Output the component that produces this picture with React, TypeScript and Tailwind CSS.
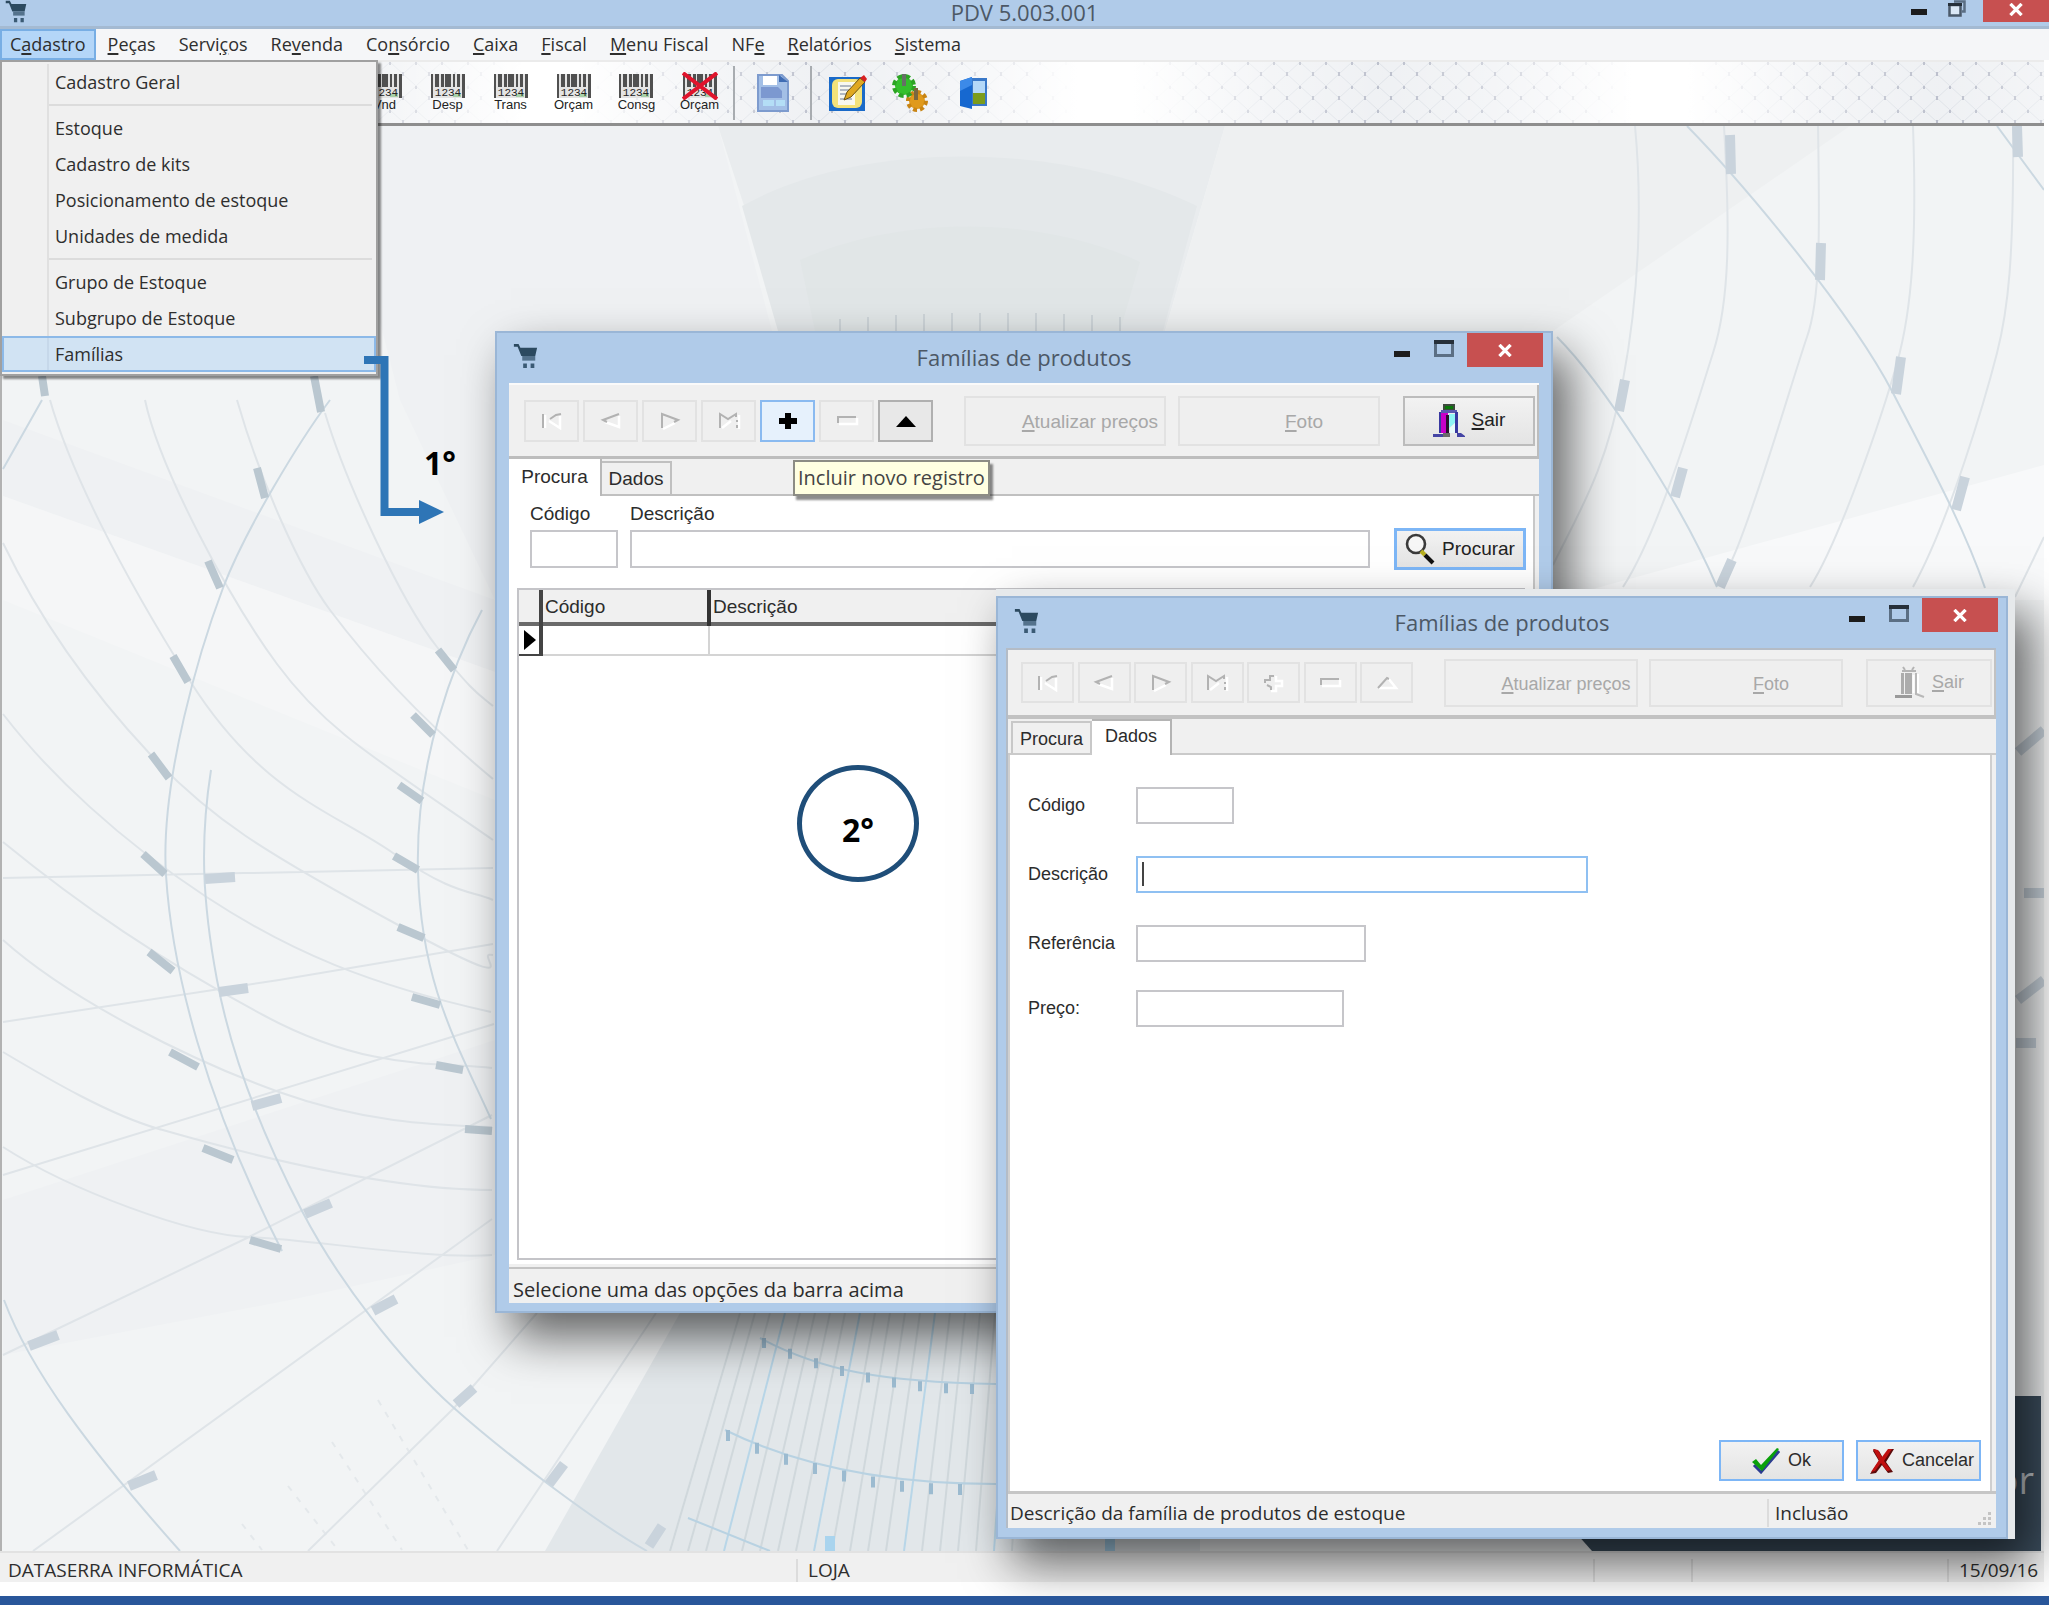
import React from "react";

type NavKind = "first" | "prev" | "next" | "last" | "add" | "remove" | "up";

interface MenuEntry {
  label: string;
  active?: boolean;
}

const MENUS = [
  "C&adastro",
  "&Peças",
  "Servi&ços",
  "Re&venda",
  "Co&nsórcio",
  "&Caixa",
  "&Fiscal",
  "&Menu Fiscal",
  "NF&e",
  "&Relatórios",
  "&Sistema",
];

const CADASTRO_GROUPS: MenuEntry[][] = [
  [{ label: "Cadastro Geral" }],
  [
    { label: "Estoque" },
    { label: "Cadastro de kits" },
    { label: "Posicionamento de estoque" },
    { label: "Unidades de medida" },
  ],
  [
    { label: "Grupo de Estoque" },
    { label: "Subgrupo de Estoque" },
    { label: "Famílias", active: true },
  ],
];

const NAV: { kind: NavKind; title: string }[] = [
  { kind: "first", title: "Primeiro registro" },
  { kind: "prev", title: "Registro anterior" },
  { kind: "next", title: "Próximo registro" },
  { kind: "last", title: "Último registro" },
  { kind: "add", title: "Incluir novo registro" },
  { kind: "remove", title: "Excluir registro" },
  { kind: "up", title: "Alterar registro" },
];

// "&" marks the accelerator letter
const Accel: React.FC<{ text: string }> = ({ text }) => {
  const at = text.indexOf("&");
  if (at < 0) return <span>{text}</span>;
  return (
    <span>
      {text.slice(0, at)}
      <span className="underline decoration-2 underline-offset-2">{text[at + 1]}</span>
      {text.slice(at + 2)}
    </span>
  );
};

const CartIcon: React.FC<{ className?: string }> = ({ className }) => (
  <svg viewBox="0 0 25 28" className={className} aria-hidden="true">
    <path d="M0 1h5l2 4h18l-2 9H8L4 4H0z" fill="#2c4a60" />
    <path d="M9 14h14v5H9z" fill="#54728c" />
    <path d="M10 22h4v5h-4zM18 22h4v5h-4z" fill="#3a5a74" />
  </svg>
);

const MinIcon = () => (
  <svg viewBox="0 0 16 6" className="h-[6px] w-[16px]" aria-hidden="true">
    <rect width="16" height="6" fill="#1c1c1c" />
  </svg>
);

const MaxIcon = () => (
  <svg viewBox="0 0 20 17" className="h-[17px] w-[20px]" aria-hidden="true">
    <rect x="1.5" y="2" width="17" height="13.5" fill="none" stroke="#5b6f84" strokeWidth="3" />
    <rect width="20" height="4" fill="#26303a" />
  </svg>
);

const RestoreIcon = () => (
  <svg viewBox="0 0 18 17" className="h-[17px] w-[18px]" aria-hidden="true">
    <path d="M6 1.5h10.5v10H14" fill="none" stroke="#5b6f84" strokeWidth="2.5" />
    <rect x="1.5" y="5" width="11" height="10.5" fill="#dbe8f6" stroke="#4b5a6a" strokeWidth="2.5" />
    <rect y="3" width="14" height="3" fill="#26303a" />
  </svg>
);

const CloseIcon = () => (
  <svg viewBox="0 0 16 14" className="h-[13px] w-[16px]" aria-hidden="true">
    <path d="M2 1l12 12M14 1L2 13" stroke="#fff" strokeWidth="3.6" />
  </svg>
);

const NAV_PATHS: Record<NavKind, { dark: string; light: string }> = {
  first: { dark: "M3 17V3M21 3l-5 1-6 4", light: "M5 17V4M9 10l11 7V5" },
  prev: { dark: "M20 3L4 9l4 2", light: "M6 11l14 5V5" },
  next: { dark: "M4 17V3l16 6-4 2", light: "M5 18l12-6" },
  last: { dark: "M3 17V3l8 5 8-5v3M20 9v2M20 14v3", light: "M5 17l9-7M22 4v14" },
  add: { dark: "M3 10V7h5V3h4M9 17v-3l-4-2", light: "M14 3v5h6v5h-6v5H9" },
  remove: { dark: "M3 12V6h18", light: "M4 13h18V7" },
  up: { dark: "M3 15L12 5l2 1", light: "M13 5l8 10H4" },
};

const NavGlyph: React.FC<{ kind: NavKind; enabled?: boolean }> = ({ kind, enabled }) => {
  if (enabled && kind === "add") {
    return (
      <svg viewBox="0 0 24 20" className="h-[20px] w-[24px]" aria-hidden="true">
        <path d="M9 2h6v5h6v6h-6v5H9v-5H3V7h6z" fill="#000" />
      </svg>
    );
  }
  if (enabled && kind === "up") {
    return (
      <svg viewBox="0 0 24 20" className="h-[20px] w-[24px]" aria-hidden="true">
        <path d="M12 5l10 11H2z" fill="#000" />
      </svg>
    );
  }
  return (
    <svg viewBox="0 0 24 20" className="h-[20px] w-[24px]" fill="none" aria-hidden="true">
      <path d={NAV_PATHS[kind].light} stroke="#fff" strokeWidth="2.5" />
      <path d={NAV_PATHS[kind].dark} stroke="#b2b2b2" strokeWidth="2" />
    </svg>
  );
};

const ExitIcon: React.FC<{ disabled?: boolean }> = ({ disabled }) =>
  disabled ? (
    <svg viewBox="0 0 32 34" className="h-[34px] w-[32px]" aria-hidden="true">
      <path d="M9 1l2 3M20 1l-2 3M8 5h14" stroke="#b4b4b4" strokeWidth="2" fill="none" />
      <path d="M7 7h3v21H7zM11 7h7v21h-7z" fill="#acacac" />
      <path d="M1 29h17v3H1z" fill="#9a9a9a" />
      <path d="M22 7v21l8 3" stroke="#b8b8b8" strokeWidth="2" fill="none" />
      <path d="M24 8v19M19.500 9v18" stroke="#fff" strokeWidth="2" />
    </svg>
  ) : (
    <svg viewBox="0 0 32 34" className="h-[34px] w-[32px]" aria-hidden="true">
      <path d="M10 0h12v6H10z" fill="#3d4a3d" />
      <path d="M12 2h8v3h-8z" fill="#0a7a0a" />
      <path d="M8 6h16v3H8z" fill="#5a5ab0" />
      <path d="M8 9h7v20H8z" fill="#c800c8" />
      <path d="M6 8h2v21H6zM22 8h3v21h-3z" fill="#3838a0" />
      <path d="M13 11h3v18h-3z" fill="#28102c" />
      <path d="M16 10h6v9l-6 5z" fill="#8ff4f4" />
      <path d="M17 24l5-5v10h-5z" fill="#e8fafa" />
      <path d="M0 30h12v3H0zM24 29h4l4 3v1h-8z" fill="#4444a4" />
      <path d="M10 29h7v4h-7z" fill="#6a6a6a" />
    </svg>
  );

const SearchIcon = () => (
  <svg viewBox="0 0 30 32" className="h-[32px] w-[30px]" aria-hidden="true">
    <circle cx="11" cy="11" r="9" fill="#f6f6f6" stroke="#3a3a3a" strokeWidth="2.6" />
    <path d="M16 18l4 4" stroke="#b8b020" strokeWidth="4" />
    <path d="M20 22l8 8" stroke="#111" strokeWidth="4" />
  </svg>
);

const CheckIcon = () => (
  <svg viewBox="0 0 28 26" className="h-[26px] w-[28px]" aria-hidden="true">
    <path d="M2 17l7 7L27 3" stroke="#2c3c90" strokeWidth="3" fill="none" />
    <path d="M0 14l4-3 5 6L25 0l2 1L10 23z" fill="#0aa00a" />
  </svg>
);

const CancelIcon = () => (
  <svg viewBox="0 0 24 26" className="h-[26px] w-[24px]" aria-hidden="true">
    <path d="M4 1l5 2 4 7 6-9h5l-8 13 7 10-5 1-6-8-6 8-6 1 9-13-6-10z" fill="#5c0a0a" />
    <path d="M3 1l5 1 4 7 6-8h4l-8 12 7 9-4 1-6-8-6 8-4 1 8-12z" fill="#c01010" />
  </svg>
);

interface AppWindowProps {
  title: string;
  className: string;
  children: React.ReactNode;
}

const AppWindow: React.FC<AppWindowProps> = ({ title, className, children }) => (
  <section
    className={`relative flex flex-col border-2 border-[#9ab6d6] bg-[#b0cbe9] font-['Liberation_Sans',sans-serif] ${className}`}
  >
    <header className="relative flex h-[50px] shrink-0 items-center justify-center pb-[2px] font-['Open_Sans',sans-serif] text-[22px] text-[#4c5866]">
      <CartIcon className="absolute left-[16px] top-[10px] h-[26px] w-[25px]" />
      <h2>{title}</h2>
      <div className="absolute right-[8px] top-0 flex h-[34px] items-center">
        <button className="flex h-full w-[42px] items-end justify-center pb-[10px]" aria-label="Minimizar">
          <MinIcon />
        </button>
        <button className="flex h-full w-[42px] items-center justify-center pb-1" aria-label="Maximizar">
          <MaxIcon />
        </button>
        <button
          className="ml-[2px] flex h-full w-[76px] items-center justify-center bg-[#c75050]"
          aria-label="Fechar"
        >
          <CloseIcon />
        </button>
      </div>
    </header>
    {children}
  </section>
);

const WideButton: React.FC<{ text: string; className: string }> = ({ text, className }) => (
  <button
    disabled
    className={`flex items-center justify-center border-2 border-[#e2e2e2] bg-[#efefef] pl-[50px] pt-1 text-[#a8a8a8] ${className}`}
  >
    <Accel text={text} />
  </button>
);

const SearchWindow = () => (
  <AppWindow title="Famílias de produtos" className="h-full text-[19px] text-[#2c2c2c]">
    <div className="mx-[12px] mb-[8px] flex min-h-0 flex-1 flex-col border-t-2 border-[#fafafa] bg-[#f0f0f0]">
      <div className="flex h-[74px] shrink-0 items-center border-b-[3px] border-r-2 border-[#bdbdbd] pl-[15px] pr-[2px]">
        <div className="flex gap-[4px]">
          {NAV.map(({ kind, title }) => {
            const enabled = kind === "add" || kind === "up";
            return (
              <button
                key={kind}
                aria-label={title}
                disabled={!enabled}
                className={`flex h-[42px] w-[55px] items-center justify-center border-2 ${
                  kind === "add"
                    ? "border-[#8abaf0] bg-[#e6f1fc]"
                    : kind === "up"
                      ? "border-[#b0b0b0] bg-[#e8e8e8]"
                      : "border-[#e2e2e2] bg-[#efefef]"
                }`}
              >
                <NavGlyph kind={kind} enabled={enabled} />
              </button>
            );
          })}
        </div>
        <WideButton text="&Atualizar preços" className="ml-auto h-[50px] w-[202px]" />
        <WideButton text="&Foto" className="ml-[12px] h-[50px] w-[202px]" />
        <button className="ml-[23px] flex h-[50px] w-[132px] items-center justify-center gap-[7px] border-2 border-[#bcbcbc] bg-gradient-to-b from-[#f2f2f2] to-[#e4e4e4] text-[#222]">
          <ExitIcon />
          <Accel text="&Sair" />
        </button>
      </div>

      <div role="tablist" className="flex h-[37px] shrink-0 items-end border-b-2 border-[#c0c0c0]">
        <button
          role="tab"
          aria-selected="true"
          className="-mb-[2px] h-[37px] w-[93px] border-r-2 border-[#b8b8b8] bg-white"
        >
          Procura
        </button>
        <button
          role="tab"
          aria-selected="false"
          className="h-[33px] w-[70px] border-r-2 border-t-2 border-[#c0c0c0] bg-[#f0f0f0] pt-[2px]"
        >
          Dados
        </button>
      </div>

      <div className="mr-[4px] flex min-h-0 flex-1 flex-col border-r-2 border-[#c8c8c8] bg-white">
        <div className="flex items-end pl-[21px] pr-[7px] pt-[6px]">
          <div className="flex w-[88px] flex-col">
            <label htmlFor="busca-codigo" className="h-[28px] leading-[24px]">
              Código
            </label>
            <input id="busca-codigo" className="h-[38px] border-2 border-[#c6c6ca] bg-white px-1" />
          </div>
          <div className="ml-[12px] flex flex-1 flex-col">
            <label htmlFor="busca-descricao" className="h-[28px] leading-[24px]">
              Descrição
            </label>
            <input id="busca-descricao" className="h-[38px] border-2 border-[#c6c6ca] bg-white px-1" />
          </div>
          <button className="-mb-[2px] ml-[24px] flex h-[42px] w-[132px] items-center justify-center gap-[7px] border-[3px] border-[#7db6f6] bg-gradient-to-b from-[#f2f2f2] to-[#e4e4e4] text-[#222]">
            <SearchIcon />
            Procurar
          </button>
        </div>

        <div className="mx-[8px] mt-[20px] min-h-0 flex-1 border-2 border-[#c4c4c8] bg-white">
          <table className="w-full table-fixed border-collapse text-left">
            <colgroup>
              <col className="w-[22px]" />
              <col className="w-[168px]" />
              <col />
            </colgroup>
            <thead>
              <tr className="h-[34px] border-b-4 border-[#6a6a6a] bg-[#f0f0f0]">
                <th className="border-r-4 border-r-[#444]" aria-label="Registro" />
                <th className="border-r-4 border-r-[#333] pl-[2px] pt-[3px] font-normal">Código</th>
                <th className="pl-[2px] pt-[3px] font-normal">Descrição</th>
              </tr>
            </thead>
            <tbody>
              <tr className="h-[31px] border-b-2 border-[#d4d4d4]">
                <td className="border-b-2 border-r-4 border-[#444] pl-[5px]">
                  <svg viewBox="0 0 12 20" className="h-[20px] w-[12px]" aria-hidden="true">
                    <path d="M0 0l12 10L0 20z" fill="#000" />
                  </svg>
                </td>
                <td className="border-r-2 border-[#d4d4d4]" />
                <td />
              </tr>
            </tbody>
          </table>
        </div>
        <div className="mt-[4px] h-[3px] shrink-0 bg-[#f0f0f0]" />
      </div>

      <footer className="flex h-[36px] shrink-0 items-center border-t-2 border-[#c4c4c4] pl-[4px] pt-[8px] font-['Open_Sans',sans-serif] text-[20px] leading-[26px]">
        Selecione uma das opções da barra acima
      </footer>
    </div>

    <div
      role="tooltip"
      className="absolute left-[296px] top-[127px] border-2 border-[#8c8c84] bg-[#ffffe1] px-[3px] font-['Open_Sans',sans-serif] text-[20px] leading-[32px] text-[#444] shadow-[3px_4px_2px_rgba(0,0,0,0.45)]"
    >
      Incluir novo registro
    </div>

    <div className="absolute left-[300px] top-[432px] flex h-[117px] w-[122px] items-center justify-center rounded-[50%] border-[5px] border-[#1f4e79] pt-3 font-['Open_Sans',sans-serif] text-[32px] font-bold text-black">
      2°
    </div>
  </AppWindow>
);

const FIELDS = [
  { id: "codigo", label: "Código", box: "w-[98px] border-[#c6c6ca]", gap: "mt-8" },
  { id: "descricao", label: "Descrição", box: "w-[452px] border-[#8fc0f2]", gap: "mt-8", caret: true },
  { id: "referencia", label: "Referência", box: "w-[230px] border-[#c6c6ca]", gap: "mt-8" },
  { id: "preco", label: "Preço:", box: "w-[208px] border-[#c6c6ca]", gap: "mt-7" },
];

const DataWindow = () => (
  <AppWindow title="Famílias de produtos" className="h-full text-[18px] text-[#2c2c2c]">
    <div className="ml-[8px] mr-[10px] mb-[9px] flex min-h-0 flex-1 flex-col border-l-2 border-t-2 border-[#b4bcc6] bg-[#f0f0f0]">
      <div className="flex h-[69px] shrink-0 items-center border-b-[4px] border-r-2 border-[#c2c2c2] pl-[13px] pr-[2px]">
        <div className="flex w-[392px] justify-between">
          {NAV.map(({ kind, title }) => (
            <button
              key={kind}
              aria-label={title}
              disabled
              className="flex h-[41px] w-[53px] items-center justify-center border-2 border-[#e2e2e2] bg-[#efefef]"
            >
              <NavGlyph kind={kind} />
            </button>
          ))}
        </div>
        <WideButton text="&Atualizar preços" className="ml-auto h-[48px] w-[194px]" />
        <WideButton text="&Foto" className="ml-[11px] h-[48px] w-[194px]" />
        <button
          disabled
          className="ml-[23px] flex h-[48px] w-[126px] items-center justify-center gap-[6px] border-2 border-[#e2e2e2] bg-[#efefef] text-[#a8a8a8]"
        >
          <ExitIcon disabled />
          <Accel text="&Sair" />
        </button>
      </div>

      <div role="tablist" className="flex h-[36px] shrink-0 items-end border-b-2 border-[#cacaca] pl-[3px]">
        <button
          role="tab"
          aria-selected="false"
          className="h-[32px] w-[81px] border-x-2 border-t-2 border-[#c8c8c8] bg-[#f0f0f0] pt-[2px]"
        >
          Procura
        </button>
        <button
          role="tab"
          aria-selected="true"
          className="-mb-[2px] h-[36px] w-[80px] border-r-2 border-t-2 border-[#b4b4b4] bg-white pb-1"
        >
          Dados
        </button>
      </div>

      <form className="mr-[4px] flex min-h-0 flex-1 flex-col border-l-2 border-r-2 border-[#cfcfcf] bg-white pl-[18px] pr-[9px]">
        {FIELDS.map((f) => (
          <div key={f.id} className={`relative flex h-[37px] items-center ${f.gap}`}>
            <label htmlFor={f.id} className="w-[108px]">
              {f.label}
            </label>
            <input id={f.id} className={`h-full border-2 bg-white px-1 ${f.box}`} />
            {f.caret && <span className="absolute left-[114px] top-[6px] h-[24px] w-[2px] bg-[#444]" />}
          </div>
        ))}
        <div className="mb-[10px] mt-auto flex justify-end gap-[12px]">
          <button
            type="button"
            className="flex h-[41px] w-[125px] items-center justify-center gap-[8px] border-2 border-[#7db6f6] bg-gradient-to-b from-[#f2f2f2] to-[#e4e4e4]"
          >
            <CheckIcon />
            Ok
          </button>
          <button
            type="button"
            className="flex h-[41px] w-[125px] items-center justify-end gap-[8px] border-2 border-[#7db6f6] bg-gradient-to-b from-[#f2f2f2] to-[#e4e4e4] pr-[5px]"
          >
            <CancelIcon />
            Cancelar
          </button>
        </div>
      </form>

      <footer className="flex h-[37px] shrink-0 items-center border-t-[3px] border-[#c6c6c6] pl-[2px] pt-[4px] font-['Open_Sans',sans-serif] text-[19px]">
        <span className="flex-1">Descrição da família de produtos de estoque</span>
        <span className="flex h-[28px] w-[229px] items-center border-l-2 border-[#dcdcdc] pl-[6px]">
          Inclusão
          <svg viewBox="0 0 14 14" className="ml-auto mr-[4px] mt-[12px] h-[14px] w-[14px]" aria-hidden="true">
            <path d="M10 0h3v3h-3zM10 5h3v3h-3zM10 10h3v3h-3zM5 5h3v3H5zM5 10h3v3H5zM0 10h3v3H0z" fill="#c4c4c4" />
          </svg>
        </span>
      </footer>
    </div>
  </AppWindow>
);

const BarcodeIcon: React.FC<{ caption: string; crossed?: boolean }> = ({ caption, crossed }) => (
  <span className="relative flex flex-col items-center">
    <svg viewBox="0 0 34 24" className="h-[24px] w-[34px]" aria-hidden="true">
      <rect width="34" height="24" fill="#e4e4e4" />
      <path d="M0 0h2v24H0zM4 0h4v13H4zM10 0h3v13h-3zM14 0h6v13h-6zM22 0h2v13h-2zM26 0h3v13h-3zM31 0h3v24h-3z" fill="#505050" />
      <path d="M22 20h8v3h-8z" fill="#a8d0a8" />
      <text x="17" y="22" fontSize="11" textAnchor="middle" fontFamily="Liberation Mono, monospace" fill="#222">
        1234
      </text>
    </svg>
    <span className="font-['Liberation_Sans',sans-serif] text-[13px] leading-[13px] text-[#222]">
      {caption}
    </span>
    {crossed && (
      <svg viewBox="0 0 36 28" className="absolute -top-[2px] h-[28px] w-[36px]" aria-hidden="true">
        <path d="M1 1l34 26M35 1L1 27" stroke="#e0142c" strokeWidth="4" />
      </svg>
    )}
  </span>
);

const DocIcon = () => (
  <svg viewBox="0 0 32 38" className="h-[38px] w-[32px]" aria-hidden="true">
    <path d="M1 1h24l6 6v30H1z" fill="#a3bfe6" stroke="#7d9bce" strokeWidth="2" />
    <path d="M6 2h14v9H6z" fill="#fff" />
    <path d="M22 1v7h9z" fill="#3f6cb4" />
    <path d="M4 13h17l4 4v7H4z" fill="#7c98d0" />
    <path d="M6 26h11v6H6zM19 26h9v6h-9z" fill="#b4def6" />
  </svg>
);

const NoteIcon = () => (
  <svg viewBox="0 0 38 36" className="h-[36px] w-[38px]" aria-hidden="true">
    <rect y="2" width="36" height="34" fill="#1a6ac8" />
    <rect x="3" y="4" width="30" height="29" rx="6" fill="#f4e27a" />
    <path d="M9 7h17v23H9z" fill="#f8f8f0" />
    <path d="M11 11h11M11 15h9M11 19h7M11 24h12" stroke="#9aa4b4" strokeWidth="1.5" />
    <path d="M15 25l3-8L31 3l5 4-14 15z" fill="#e0a820" stroke="#6a5010" />
    <path d="M31 3l4-3 3 4-2 3z" fill="#d82020" />
  </svg>
);

const GearsIcon = () => (
  <svg viewBox="0 0 38 38" className="h-[38px] w-[38px]" aria-hidden="true">
    <circle cx="25" cy="27" r="8" fill="#e09a1c" />
    <circle cx="25" cy="27" r="9" fill="none" stroke="#c88414" strokeWidth="4" strokeDasharray="4 3" />
    <circle cx="12" cy="12" r="9" fill="#34c02c" />
    <circle cx="12" cy="12" r="10" fill="none" stroke="#2ca424" strokeWidth="4" strokeDasharray="5 3" />
    <path d="M10 0h4v12h-4z" fill="#667066" />
    <path d="M22 14h4v12h-4z" fill="#7a6840" />
  </svg>
);

const DoorIcon = () => (
  <svg viewBox="0 0 30 32" className="h-[32px] w-[30px]" aria-hidden="true">
    <path d="M12 1h16v28H12z" fill="#3a78c8" />
    <path d="M14 4h12v12H14z" fill="#b4d8f8" />
    <path d="M14 16h12v11H14z" fill="#7c9c1c" />
    <path d="M1 4l12-4v32L1 29z" fill="#1668d0" />
    <path d="M1 4l12-4v8L1 14z" fill="#3c8ae8" />
  </svg>
);

const TOOL = "flex h-[44px] w-[63px] items-center justify-center";

const Toolbar = () => (
  <div
    role="toolbar"
    className="relative mr-[5px] flex h-[66px] shrink-0 items-center border-b-[3px] border-t-2 border-b-[#8e8e8e] border-t-[#ebebeb] bg-[#eef0f3] pl-[353px]"
  >
    <svg className="absolute inset-0 h-full w-full" aria-hidden="true">
      <defs>
        <pattern id="mesh" width="26" height="24" patternUnits="userSpaceOnUse">
          <path d="M0 0l13 12L26 0M0 24l13-12 13 12" stroke="#dde1e6" fill="none" />
          <path d="M12 10h2v4h-2zM0 0h1v3H0zM25 0h1v3h-1z" fill="#b9bdca" />
        </pattern>
        <linearGradient id="sheen" gradientUnits="userSpaceOnUse" x1="-5" y1="0" x2="550" y2="0" spreadMethod="repeat">
          <stop offset="0" stopColor="#fff" />
          <stop offset="0.05" stopColor="#fff" />
          <stop offset="0.3" stopColor="#fff" stopOpacity="0.35" />
          <stop offset="0.5" stopColor="#fff" stopOpacity="0.05" />
          <stop offset="0.7" stopColor="#fff" stopOpacity="0.35" />
          <stop offset="0.95" stopColor="#fff" />
          <stop offset="1" stopColor="#fff" />
        </linearGradient>
      </defs>
      <rect width="100%" height="100%" fill="url(#mesh)" />
      <rect width="100%" height="100%" fill="url(#sheen)" />
    </svg>
    <div className="relative flex items-center">
      {["Vnd", "Desp", "Trans", "Orçam", "Consg"].map((c) => (
        <button key={c} className={TOOL}>
          <BarcodeIcon caption={c} />
        </button>
      ))}
      <button className={TOOL}>
        <BarcodeIcon caption="Orçam" crossed />
      </button>
      <span className="ml-[2px] h-[54px] w-[2px] bg-[#a8acb0]" />
      <button className="mx-[6px] flex h-[44px] w-[63px] items-center justify-center" aria-label="Relatório">
        <DocIcon />
      </button>
      <span className="mr-[4px] h-[54px] w-[2px] bg-[#a8acb0]" />
      <button className={TOOL} aria-label="Anotações">
        <NoteIcon />
      </button>
      <button className={TOOL} aria-label="Configurações">
        <GearsIcon />
      </button>
      <button className={TOOL} aria-label="Sair">
        <DoorIcon />
      </button>
    </div>
  </div>
);

const ARCS = [
  "M330 400C300 440 245 530 223 588S160 780 166 875S205 1100 282 1251",
  "M482 610C455 660 415 760 418 871S455 1040 491 1119",
  "M211 770C200 840 202 900 217 980S265 1140 302 1211S400 1360 454 1408S600 1525 647 1551",
  "M4 1300C30 1370 90 1450 180 1551",
  "M42 400L3 469",
  "M1687 126C1740 180 1850 310 1893 393S1965 530 1985 588",
  "M1557 337C1600 380 1680 500 1717 587",
  "M1997 126L2044 190",
];

const FAINT = [
  "M50 400C70 470 120 570 190 681S330 810 393 853S470 890 493 900",
  "M145 400C160 470 230 600 277 664S370 755 493 840",
  "M237 400C260 480 300 570 330 610S410 710 493 779",
  "M325 413C345 480 400 600 437 647S480 695 493 706",
  "M3 543C40 620 90 690 150 754S260 850 400 926S470 950 493 955",
  "M3 714C50 775 120 840 205 896S370 985 491 1012",
  "M3 842C80 905 160 960 265 1016S440 1062 492 1068",
  "M3 940C70 1000 190 1060 279 1092S440 1125 492 1127",
  "M3 1052C50 1080 110 1115 159 1129S370 1190 492 1190",
  "M3 1147C70 1190 190 1235 249 1237S430 1260 492 1255",
  "M3 878L493 868",
  "M3 1022L279 980L493 944",
  "M3 1175L494 1024",
  "M3 1355L249 1237L492 1115",
  "M33 1551L492 1219",
  "M308 1551L454 1408L537 1313",
  "M497 1551L656 1313",
  "M1635 126C1642 200 1640 290 1623 380S1580 510 1553 565",
  "M1724 126C1730 230 1730 300 1713 353S1660 530 1623 587",
  "M1818 126C1820 240 1820 300 1807 337S1755 510 1732 560",
  "M1913 126C1917 240 1912 310 1897 363S1840 540 1810 587",
  "M2013 126C2014 260 2008 310 1997 353S1950 520 1913 587",
  "M2044 537L2015 597",
];

const MARKS = [
  "M42 376L45 396M314 376L321 412M257 468L265 498M208 561L220 588M173 656L188 682M151 754L169 778M143 854L165 874M149 952L173 971M170 1052L198 1067M203 1148L233 1160M250 1240L281 1249",
  "M438 650L454 670M413 715L433 735M399 785L422 801M394 856L418 870M398 927L424 938M412 997L440 1005M436 1065L463 1070M465 1129L492 1131",
];

const SOFT_MARKS =
  "M205 879L235 877M219 992L248 988M252 1106L281 1098M305 1214L331 1203M373 1311L396 1299M456 1404L474 1388M549 1484L564 1464M649 1546L662 1526M29 1346L58 1335M129 1486L156 1475M1730 135L1731 174M1821 243L1820 280M1901 357L1896 394M1965 477L1956 510M1625 380L1619 411M1683 468L1675 497M1732 560L1720 587M2017 126L2018 157M2018 752L2044 730M2024 893H2044M2018 1000L2044 980M2016 1043H2036";

// radial glass facade drawn behind the windows
const Wallpaper = () => (
  <svg
    viewBox="0 126 2044 1425"
    preserveAspectRatio="none"
    className="absolute inset-0 h-full w-full"
    fill="none"
    aria-hidden="true"
  >
    <rect y="126" width="2044" height="1425" fill="#f2f4f5" />
    <path d="M330 126H718L772 331H495V600L400 400z" fill="#eff1f3" />
    <path d="M718 126H1225L1165 331H785z" fill="#e9ecee" />
    <path d="M742 206C860 140 1060 140 1197 206L1163 331H778z" fill="#e4e8ea" />
    <path d="M800 260C900 215 1040 215 1140 262L1120 331H815z" fill="#e1e6e7" />
    <path d="M1225 126H1850L1553 331H1165z" fill="#eef0f1" />
    <path d="M3 420L495 600V672L3 496z" fill="#eff1f3" />
    <path d="M3 496L495 672V800L3 600z" fill="#f5f6f7" />
    <path d="M3 1200L495 1040V1255L290 1300L3 1355z" fill="#eff1f3" />
    <path d="M1553 600L2044 465V600z" fill="#f8f9fa" />
    <path d="M680 1313H1200V1551H545z" fill="#e2e7ea" />
    {Array.from({ length: 20 }, (_, i) => (
      <path
        key={i}
        d={`M${740 + i * 15} 1313L${670 + i * 18} 1551`}
        stroke={i % 5 === 3 ? "#b8d6e8" : "#d0d8dc"}
        strokeWidth="2"
      />
    ))}
    <path d="M760 1338C820 1370 880 1382 996 1384M725 1430C790 1462 880 1484 996 1484M688 1518L770 1551" stroke="#b8d2e2" strokeWidth="2" />
    {[0, 1, 2, 3, 4, 5, 6, 7, 8].map((i) => (
      <path
        key={i}
        d={`M${764 + i * 26} ${1338 + 46 * (1 - (1 - i / 8) ** 2)}v10M${728 + i * 29} ${1430 + 54 * (1 - (1 - i / 8) ** 2)}v11`}
        stroke="#9cbbd0"
        strokeWidth="4"
      />
    ))}
    <path d="M378 1400l90 150M332 1442l70 108M288 1486l50 64M242 1524l20 26" stroke="#e4e8eb" strokeWidth="2" strokeDasharray="6 8" />
    <path d="M825 1536h10v15h-10zM1105 1539h10v12h-10z" fill="#a9d4ee" />
    <path d={FAINT.join("")} stroke="#dfe4e8" strokeWidth="2" />
    <path d={ARCS.join("")} stroke="#cbd8e1" strokeWidth="2" />
    <path d={MARKS.join("")} stroke="#bac7d0" strokeWidth="8" />
    <path d={SOFT_MARKS} stroke="#c9d3dc" strokeWidth="10" />
    <path d="M840 331v-12M868 331v-14M896 331v-16M924 331v-17M952 331v-18M980 331v-18M1008 331v-18M1036 331v-18M1064 331v-17M1092 331v-16M1120 331v-14" stroke="#cdd4d8" strokeWidth="2" />
    <path d="M1560 1396H2041V1551H1592L1560 1515z" fill="#3c4e5e" />
    <path d="M1 126V1551" stroke="#b2b2b2" strokeWidth="2" />
  </svg>
);

const CadastroMenu = () => (
  <div
    role="menu"
    className="absolute left-0 top-full z-30 w-[378px] border-2 border-[#a0a0a0] bg-[#f0f0f0] py-[2px] shadow-[3px_3px_2px_rgba(0,0,0,0.45)]"
  >
    {CADASTRO_GROUPS.map((group, g) => (
      <React.Fragment key={g}>
        {g > 0 && (
          <div className="ml-[45px] mr-[4px] flex h-[10px] items-center border-l-2 border-[#e0e0e0]">
            <span className="h-[2px] w-full bg-[#dcdcdc]" />
          </div>
        )}
        {group.map((item) => (
          <button
            key={item.label}
            role="menuitem"
            className={`flex h-[36px] w-full items-stretch px-[2px] text-left ${
              item.active ? "outline-2 -outline-offset-2 outline-[#8cb9e8] bg-[#d1e3f3]" : ""
            }`}
          >
            <span
              className={`ml-[43px] flex items-center border-l-2 pl-[6px] ${
                item.active ? "border-[#c6d8ea]" : "border-[#e0e0e0]"
              }`}
            >
              {item.label}
            </span>
          </button>
        ))}
      </React.Fragment>
    ))}
  </div>
);

const App: React.FC = () => (
  <div className="flex h-screen flex-col overflow-hidden bg-white font-['Open_Sans',sans-serif] text-[18px] text-[#2e2e2e]">
    <header className="relative flex h-[29px] shrink-0 items-start justify-center border-b-[3px] border-[#a4bad2] bg-[#b0cbe9] text-[#4c5866]">
      <CartIcon className="absolute left-[5px] top-0 h-[23px] w-[22px]" />
      <h1 className="text-[22px] leading-[24px]">PDV 5.003.001</h1>
      <div className="absolute right-0 top-0 flex h-[22px] items-center">
        <button className="flex h-full w-[36px] items-end justify-center pb-[7px]" aria-label="Minimizar">
          <MinIcon />
        </button>
        <button className="flex h-full w-[40px] items-start justify-center" aria-label="Restaurar">
          <RestoreIcon />
        </button>
        <button className="ml-[6px] flex h-full w-[66px] items-center justify-center bg-[#c75050] pb-1" aria-label="Fechar">
          <CloseIcon />
        </button>
      </div>
    </header>

    <nav className="relative z-30 flex h-[31px] shrink-0 items-stretch gap-px bg-[#f5f6f8]">
      {MENUS.map((m, i) =>
        i === 0 ? (
          <div key={m}>
            <button className="h-full border-2 border-[#78aee4] bg-[#b4d6f8] px-[8px]">
              <Accel text={m} />
            </button>
            <CadastroMenu />
          </div>
        ) : (
          <button key={m} className="px-[11px]">
            <Accel text={m} />
          </button>
        )
      )}
    </nav>

    <Toolbar />

    <main className="relative z-10 mr-[5px] min-h-0 flex-1">
      <Wallpaper />
      <span className="absolute bottom-[48px] right-[10px] text-[38px] leading-[48px] text-[#c4cad0]">or</span>

      <div className="absolute left-[495px] top-[205px] h-[982px] w-[1058px] shadow-[16px_24px_45px_rgba(0,0,0,0.6)]">
        <SearchWindow />
      </div>

      <div className="absolute left-[996px] top-[463px] h-[950px] w-[1019px] bg-[#e6e9eb] pr-[7px] pt-[7px] shadow-[16px_24px_45px_rgba(0,0,0,0.6)]">
        <DataWindow />
      </div>
    </main>

    <svg viewBox="0 0 80 170" className="absolute left-[364px] top-[355px] z-40 h-[170px] w-[80px]" aria-hidden="true">
      <path d="M0 5h20.500v152H56" fill="none" stroke="#2e75b6" strokeWidth="8" />
      <path d="M55 145l25 12-25 12z" fill="#2e75b6" />
    </svg>
    <span className="absolute left-[424px] top-[441px] z-20 text-[32px] font-bold leading-[44px] text-black">1°</span>

    <footer className="mr-[5px] flex h-[31px] shrink-0 items-center border-t-2 border-[#e2e2e2] bg-[#f0f0f0] pt-[6px] text-[19px] leading-[23px]">
      <span className="w-[796px] pl-[8px]">DATASERRA INFORMÁTICA</span>
      <span className="flex-1 border-l-2 border-[#dcdcdc] pl-[10px]">LOJA</span>
      <span className="h-[23px] w-[98px] border-l-2 border-[#dcdcdc]" />
      <span className="h-[23px] w-[256px] border-l-2 border-[#dcdcdc]" />
      <span className="w-[97px] border-l-2 border-[#dcdcdc] pl-[10px]">15/09/16</span>
    </footer>
    <div className="h-[23px] shrink-0" />
    <div className="absolute bottom-0 left-0 z-20 h-[9px] w-full bg-[#29569a]" />
  </div>
);

export default App;
